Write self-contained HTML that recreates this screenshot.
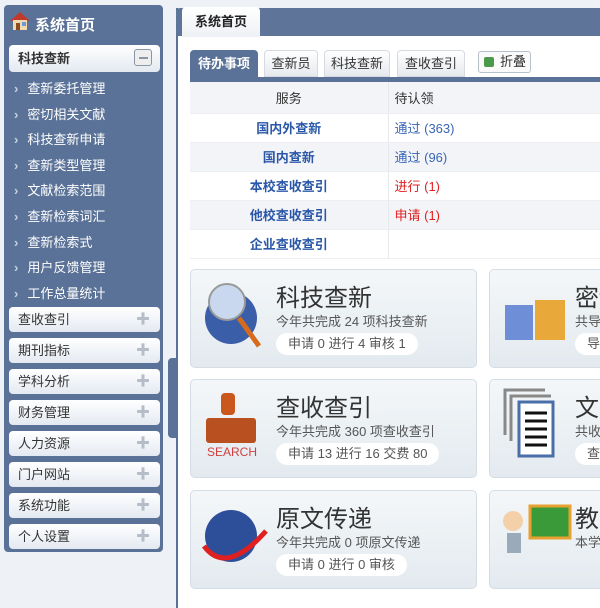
<!DOCTYPE html>
<html><head><meta charset="utf-8"><style>
*{margin:0;padding:0;box-sizing:border-box}
body{width:600px;height:600px;overflow:hidden;background:#eef2f6;font-family:"Liberation Sans","Noto Sans CJK SC",sans-serif;position:relative;font-size:13px}
.abs{position:absolute}
#side{left:4px;top:5px;width:159px;height:547px;background:#5a7297;border-radius:4px}
#side .hd{position:absolute;left:31px;top:9px;color:#fff;font-size:15px;font-weight:bold}
.grp{position:absolute;left:5px;width:151px;height:25px;border-radius:4px;background:linear-gradient(#fff,#e4e9f1);color:#333;font-size:13px;line-height:25px;padding-left:9px}
.grp .p{position:absolute;right:10px;top:0;color:#b5bdc8;font-size:14px}
.it{position:absolute;left:10px;color:#fff;font-size:13px}
.it:before{content:"›";color:#c7d2e2;margin-right:9px;font-weight:bold}
#main{left:176px;top:8px;width:430px;height:600px;background:#fff;border-left:2px solid #5a7297}
#mh{left:176px;top:8px;width:430px;height:28px;background:#5e7599;border-radius:4px 0 0 0}
#mt{left:182px;top:7px;width:78px;height:30px;background:linear-gradient(#fff,#eef1f5);border-radius:4px 4px 0 0;font-weight:bold;font-size:13px;line-height:30px;text-align:center;color:#222}
.tb{position:absolute;top:50px;height:27px;border-radius:4px 4px 0 0;background:linear-gradient(#fff,#e6e9ee);border:1px solid #d6dae0;text-align:center;line-height:25px;font-size:13px;color:#333}
table{position:absolute;left:190px;top:82px;width:410px;border-collapse:collapse}
td{height:29px;font-size:13px;border-bottom:1px solid #eceef1}
td:first-child{width:198px;text-align:center;color:#2a57a8;font-weight:bold;border-right:1px solid #e6e8eb}
td+td{padding-left:6px;color:#3a66b5}
tr:nth-child(odd) td{background:#f3f4f7}
.card{position:absolute;width:287px;height:99px;border:1px solid #d5dde4;border-radius:5px;background:linear-gradient(#f4f7f9,#e3eaef)}
.card .t{position:absolute;left:85px;top:8px;font-size:24px;color:#333}
.card .s{position:absolute;left:85px;top:41px;font-size:13px;color:#555}
.card .pl{position:absolute;left:85px;top:63px;height:22px;padding:0 12px;border-radius:11px;background:#fff;font-size:13px;line-height:22px;color:#555}
</style></head><body>
<div id="side" class="abs">
<svg class="abs" style="left:5px;top:5px" width="22" height="22" viewBox="0 0 22 22"><path d="M1 11 L11 2 L21 11Z" fill="#c0392b"/><rect x="4" y="10" width="14" height="10" fill="#f3d9b0"/><rect x="7" y="13" width="4" height="7" fill="#8a4b1f"/><rect x="13" y="12" width="4" height="4" fill="#6a9bd8"/></svg>
<div class="hd">系统首页</div>
<div class="grp" style="top:40px;height:27px;line-height:27px;font-weight:bold">科技查新<span style="position:absolute;right:8px;top:4px;width:18px;height:17px;border:1px solid #8a96a6;border-radius:3px;background:#eee"><span style="position:absolute;left:4px;top:7px;width:9px;height:2px;background:#8a96a6"></span></span></div>
<div class="it" style="top:73px">查新委托管理</div>
<div class="it" style="top:99px">密切相关文献</div>
<div class="it" style="top:124px">科技查新申请</div>
<div class="it" style="top:150px">查新类型管理</div>
<div class="it" style="top:175px">文献检索范围</div>
<div class="it" style="top:201px">查新检索词汇</div>
<div class="it" style="top:227px">查新检索式</div>
<div class="it" style="top:252px">用户反馈管理</div>
<div class="it" style="top:278px">工作总量统计</div>
<div class="grp" style="top:302px">查收查引<span class="p">✚</span></div>
<div class="grp" style="top:333px">期刊指标<span class="p">✚</span></div>
<div class="grp" style="top:364px">学科分析<span class="p">✚</span></div>
<div class="grp" style="top:395px">财务管理<span class="p">✚</span></div>
<div class="grp" style="top:426px">人力资源<span class="p">✚</span></div>
<div class="grp" style="top:457px">门户网站<span class="p">✚</span></div>
<div class="grp" style="top:488px">系统功能<span class="p">✚</span></div>
<div class="grp" style="top:519px">个人设置<span class="p">✚</span></div>
</div>
<div class="abs" style="left:168px;top:358px;width:8px;height:80px;background:#5a7297;border-radius:4px 0 0 4px"></div>
<div id="main" class="abs"></div>
<div id="mh" class="abs"></div>
<div id="mt" class="abs">系统首页</div>
<div class="tb" style="left:190px;width:68px;background:#5a7297;color:#fff;font-weight:bold;border-color:#5a7297">待办事项</div>
<div class="tb" style="left:264px;width:54px">查新员</div>
<div class="tb" style="left:324px;width:66px">科技查新</div>
<div class="tb" style="left:397px;width:68px">查收查引</div>
<div class="abs" style="left:478px;top:51px;width:53px;height:22px;border:1px solid #b8c0c8;border-radius:3px;background:#fafafa;font-size:13px;line-height:20px;padding-left:5px;color:#333"><span style="display:inline-block;width:10px;height:10px;background:#4b9a4b;border-radius:2px;vertical-align:-1px;margin-right:6px"></span>折叠</div>
<div class="abs" style="left:190px;top:77px;width:410px;height:5px;background:#5a7297"></div>
<table>
<tr><td style="color:#333;font-weight:normal;height:31px">服务</td><td style="color:#333">待认领</td></tr>
<tr><td>国内外查新</td><td>通过 (363)</td></tr>
<tr><td>国内查新</td><td>通过 (96)</td></tr>
<tr><td>本校查收查引</td><td style="color:#e02020">进行 (1)</td></tr>
<tr><td>他校查收查引</td><td style="color:#e02020">申请 (1)</td></tr>
<tr><td>企业查收查引</td><td></td></tr>
</table>
<div class="card" style="left:190px;top:269px"><svg class="abs" style="left:10px;top:8px" width="70" height="80"><circle cx="30" cy="40" r="26" fill="#3a5fa8"/><circle cx="26" cy="24" r="18" fill="#c9d8ee" stroke="#999" stroke-width="2"/><path d="M38 40 L58 68" stroke="#d86a1c" stroke-width="5"/></svg><div class="t">科技查新</div><div class="s">今年共完成 24 项科技查新</div><div class="pl">申请 0 进行 4 审核 1</div></div>
<div class="card" style="left:489px;top:269px"><svg class="abs" style="left:10px;top:10px" width="70" height="70"><rect x="5" y="25" width="28" height="35" fill="#6e8fd8"/><rect x="35" y="20" width="30" height="40" fill="#e8a93a"/></svg><div class="t">密切</div><div class="s">共导入</div><div class="pl">导入</div></div>
<div class="card" style="left:190px;top:379px"><svg class="abs" style="left:10px;top:8px" width="75" height="80"><rect x="20" y="5" width="14" height="22" fill="#c9571e" rx="4"/><rect x="5" y="30" width="50" height="25" fill="#b85020" rx="3"/><text x="6" y="68" font-size="12" fill="#d04040" font-family="Liberation Sans">SEARCH</text></svg><div class="t">查收查引</div><div class="s">今年共完成 360 项查收查引</div><div class="pl">申请 13 进行 16 交费 80</div></div>
<div class="card" style="left:489px;top:379px"><svg class="abs" style="left:10px;top:5px" width="70" height="80"><path d="M5 50V5h40M11 56V11h40" stroke="#888" stroke-width="3" fill="none"/><rect x="19" y="17" width="34" height="54" fill="#fff" stroke="#4a6ea8" stroke-width="3"/><path d="M25 28h22M25 36h22M25 44h22M25 52h22M25 60h22" stroke="#111" stroke-width="3"/></svg><div class="t">文献</div><div class="s">共收录</div><div class="pl">查询</div></div>
<div class="card" style="left:190px;top:490px"><svg class="abs" style="left:5px;top:10px" width="80" height="70"><circle cx="35" cy="35" r="26" fill="#2d4f9a"/><path d="M8 45 Q30 75 70 30" stroke="#e02020" stroke-width="5" fill="none"/></svg><div class="t">原文传递</div><div class="s">今年共完成 0 项原文传递</div><div class="pl">申请 0 进行 0 审核</div></div>
<div class="card" style="left:489px;top:490px"><svg class="abs" style="left:5px;top:10px" width="80" height="70"><rect x="35" y="5" width="40" height="32" fill="#3a9a3a" stroke="#e8a030" stroke-width="3"/><circle cx="18" cy="20" r="10" fill="#f3d0a8"/><rect x="12" y="32" width="14" height="20" fill="#9ab"/></svg><div class="t">教学</div><div class="s">本学期</div></div>
</body></html>
